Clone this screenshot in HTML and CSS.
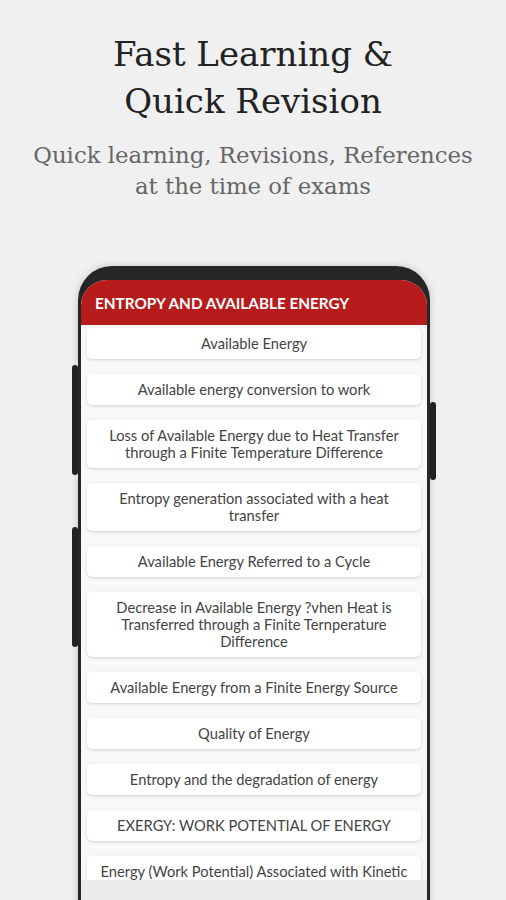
FILE: index.html
```html
<!DOCTYPE html>
<html lang="en">
<head>
  <meta charset="UTF-8" />
  <meta name="viewport" content="width=device-width, initial-scale=1.0" />
  <title>Fast Learning &amp; Quick Revision</title>
  <link rel="stylesheet" href="styles.css">
</head>
<body>
  <div class="intro">
    <h1>Fast Learning &amp;<br>Quick Revision</h1>
    <p class="tagline">Quick learning, Revisions, References<br>at the time of exams</p>
  </div>

  <!-- Phone mockup -->
  <div class="phone">
    <span class="side-key left-top"></span>
    <span class="side-key left-bottom"></span>
    <span class="side-key right"></span>

    <div class="screen">
      <div class="app-bar">ENTROPY AND AVAILABLE ENERGY</div>
      <div class="topic-list">
        <div class="topic">Available Energy</div>
        <div class="topic">Available energy conversion to work</div>
        <div class="topic">Loss of Available Energy due to Heat Transfer<br>through a Finite Temperature Difference</div>
        <div class="topic">Entropy generation associated with a heat<br>transfer</div>
        <div class="topic">Available Energy Referred to a Cycle</div>
        <div class="topic">Decrease in Available Energy ?vhen Heat is<br>Transferred through a Finite Ternperature<br>Difference</div>
        <div class="topic">Available Energy from a Finite Energy Source</div>
        <div class="topic">Quality of Energy</div>
        <div class="topic">Entropy and the degradation of energy</div>
        <div class="topic">EXERGY: WORK POTENTIAL OF ENERGY</div>
        <div class="topic">Energy (Work Potential) Associated with Kinetic</div>
      </div>
      <div class="bottom-strip"></div>
    </div>
  </div>
</body>
</html>
```

FILE: styles.css
```css
body {
  margin: 0;
  padding: 0;
  background-color: #f0f0f0;
  font-family: 'Lato', 'Noto Sans', sans-serif;
  overflow: hidden;
}
.intro {
  text-align: center;
  padding-top: 31px;
}
h1 {
  font-family: 'DejaVu Serif', serif;
  font-weight: normal;
  font-size: 34px;
  line-height: 47px;
  margin: 0;
  color: #222;
}
.tagline {
  font-family: 'DejaVu Serif', serif;
  font-size: 22.8px;
  line-height: 31px;
  margin: 15px 0 0;
  color: #666;
  white-space: nowrap;
}
.phone {
  position: relative;
  width: 346px;
  margin: 64px 0 0 78px;
  border: 3px solid #262626;
  border-top-width: 14px;
  border-bottom: none;
  border-radius: 34px 34px 0 0;
  background-color: #262626;
  box-shadow: 0 0 8px rgba(0, 0, 0, 0.18);
}
.side-key {
  position: absolute;
  width: 6px;
  background-color: #222;
  border-radius: 3px;
}
.left-top {
  left: -9px;
  top: 85px;
  height: 110px;
}
.left-bottom {
  left: -9px;
  top: 247px;
  height: 120px;
}
.right {
  right: -9px;
  top: 122px;
  height: 78px;
}
.screen {
  background-color: #f8f8f8;
  border-radius: 26px 26px 0 0;
  overflow: hidden;
}
.app-bar {
  background-color: #b71c1c;
  color: #fff;
  font-weight: bold;
  font-size: 15.3px;
  height: 45px;
  line-height: 46px;
  padding-left: 14px;
}
.topic-list {
  height: 552px;
  overflow: hidden;
  padding: 3px 6px 0;
  display: flex;
  flex-direction: column;
  gap: 15px;
}
.topic {
  flex-shrink: 0;
  background-color: #fff;
  border-radius: 5px;
  box-shadow: 0 1px 3px rgba(0, 0, 0, 0.16);
  padding: 7px 8px;
  text-align: center;
  font-size: 14.7px;
  line-height: 17px;
  color: #444;
}
.bottom-strip {
  height: 40px;
  background-color: #ebebeb;
}
```
